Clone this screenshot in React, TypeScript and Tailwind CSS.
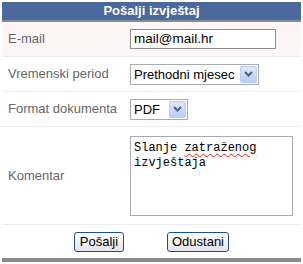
const SelectArrow = () => (
  <div className="mr-[1px] flex h-[17px] w-[17px] shrink-0 items-center justify-center rounded-[2px] border border-[#b8cbf4] bg-gradient-to-b from-[#dfe8fb] to-[#b9cdf6]">
    <svg width="9" height="6" viewBox="0 0 9 6">
      <path d="M1 1 L4.5 4.5 L8 1" fill="none" stroke="#4d6185" strokeWidth="2" />
    </svg>
  </div>
);

const Select = ({ value, width }: { value: string; width: string }) => (
  <div className={`flex h-[21px] items-center border border-[#a5acb2] bg-white pl-[3px] ${width}`}>
    <span className="min-w-0 flex-1 whitespace-nowrap text-[13px] leading-none text-black">{value}</span>
    <SelectArrow />
  </div>
);

const Row = ({ label, height, bg, children }: { label: string; height: string; bg?: string; children: React.ReactNode }) => (
  <div className={`flex items-center border-b border-[#ececec] ${height} ${bg ?? "bg-white"}`}>
    <div className="w-[128px] whitespace-nowrap pl-[6px] text-[13px] text-[#666]">{label}</div>
    {children}
  </div>
);

const Button = ({ label, width }: { label: string; width: string }) => (
  <button className={`h-[20px] rounded-[3px] border border-[#1c4f83] bg-gradient-to-b from-white to-[#e3e3ec] text-[13px] leading-none text-black ${width}`}>
    {label}
  </button>
);

export default function App() {
  return (
    <div className="h-[264px] w-[303px] bg-white px-[2px] pt-[2px] font-['Liberation_Sans',Arial,sans-serif]">
      <div className="h-[20px] border-b-2 border-[#8a8a8a] bg-[#4a699c] text-center text-[13px] font-bold leading-[18px] text-white">
        Pošalji izvještaj
      </div>
      <Row label="E-mail" height="h-[35px]" bg="bg-[#fdf5f5]">
        <div className="flex h-[20px] w-[146px] items-center border border-[#8e8e8e] bg-white pl-[3px] text-[13.5px] text-black">
          mail@mail.hr
        </div>
      </Row>
      <Row label="Vremenski period" height="h-[35px]">
        <Select value="Prethodni mjesec" width="w-[129px]" />
      </Row>
      <Row label="Format dokumenta" height="h-[35px]">
        <Select value="PDF" width="w-[58px]" />
      </Row>
      <Row label="Komentar" height="h-[98px]">
        <div className="h-[80px] w-[163px] border border-[#a5acb2] bg-white px-[3px] pt-[4px] font-['Liberation_Mono',monospace] text-[12px] leading-[15px] text-black">
          Slanje{" "}
          <span className="underline decoration-[#e02020] decoration-wavy decoration-1 underline-offset-2">zatraženog</span>
          <br />
          izvještaja
        </div>
      </Row>
      <div className="flex h-[33px] items-center justify-center gap-[43px]">
        <Button label="Pošalji" width="w-[50px]" />
        <Button label="Odustani" width="w-[62px]" />
      </div>
      <div className="h-[4px] bg-[#8a8a8a]" />
    </div>
  );
}
